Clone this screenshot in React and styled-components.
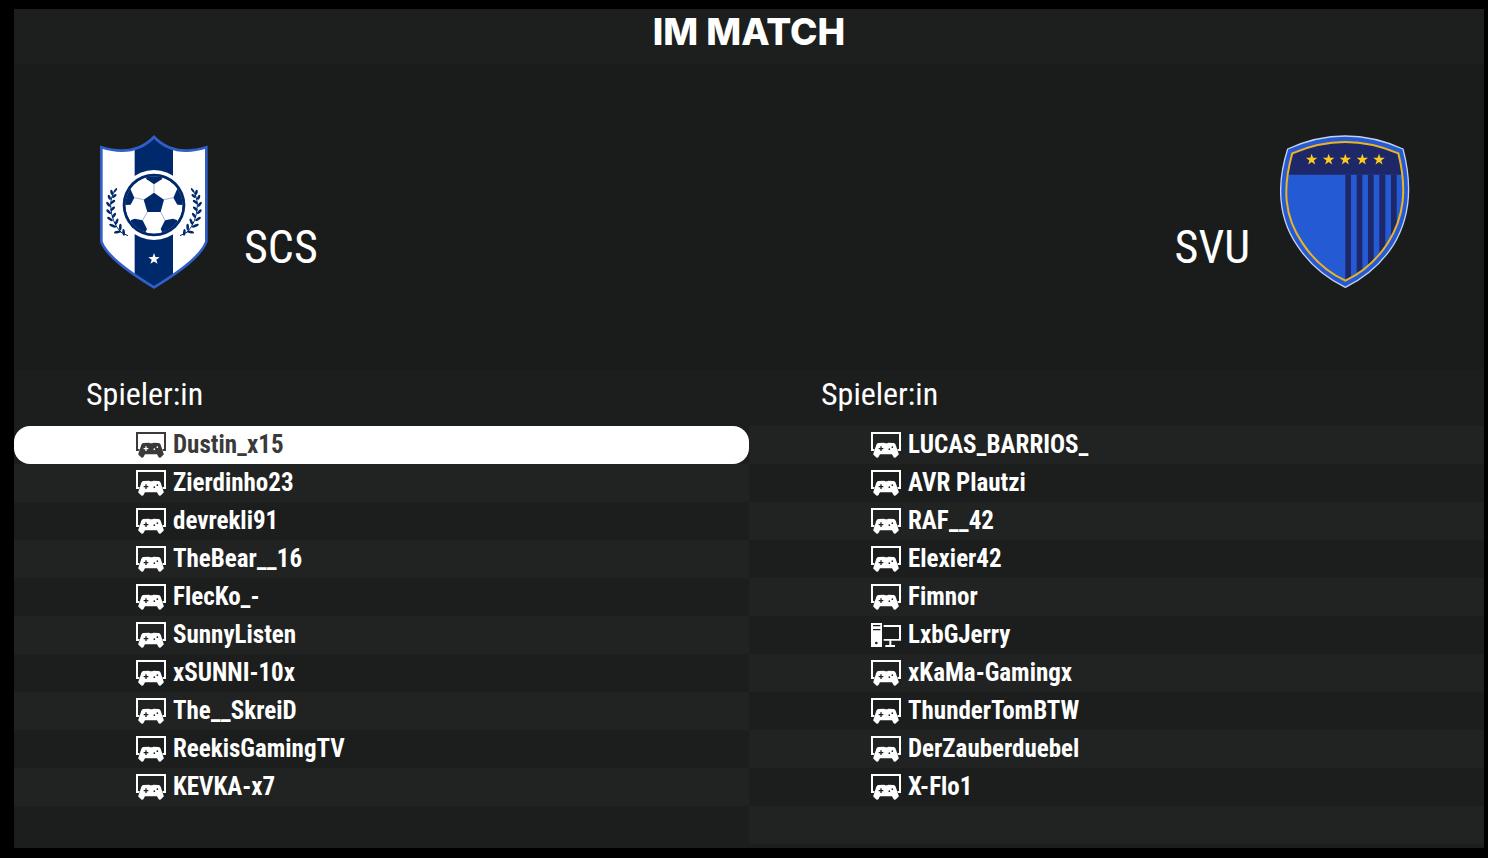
import React from "react";
import styled, { createGlobalStyle } from "styled-components";

const GlobalStyle = createGlobalStyle`
  * {
    box-sizing: border-box;
  }
  body {
    margin: 0;
    background: #000;
    color: #fff;
    font-family: "Roboto Condensed", Roboto, sans-serif;
  }
`;
const Page = styled.div`
  min-height: 100vh;
  padding: 9px 4px 10px 14px;
  display: flex;
`;
const Screen = styled.main`
  flex: 1;
  display: flex;
  flex-direction: column;
  background: #1a1c1b;
`;
const TitleBar = styled.header`
  padding: 3px 0 12px;
  background: #1d1f1e;
`;
const Title = styled.h1`
  margin: 0;
  font-family: Inter, sans-serif;
  font-size: 37px;
  line-height: 40px;
  font-weight: 800;
  text-align: center;
`;
const Matchup = styled.section`
  display: flex;
  justify-content: space-between;
  padding: 71px 74px 81px 86px;
`;
const Club = styled.div`
  display: flex;
  align-items: flex-end;
  gap: ${(props) => (props.$away ? "30px" : "36px")};
  flex-direction: ${(props) => (props.$away ? "row-reverse" : "row")};
`;
const ClubName = styled.h2`
  margin: 0;
  padding-bottom: 14px;
  font-size: 46px;
  line-height: 56px;
  font-weight: 400;
`;
const Crest = styled.svg`
  display: block;
  height: 154px;
`;
const Lineups = styled.section`
  flex: 1;
  display: grid;
  grid-template-columns: 1fr 1fr;
  align-items: start;
  background: #1c1e1d;
`;
const PlayerTable = styled.table`
  width: 100%;
  border-collapse: separate;
  border-spacing: 0;
`;
const HeadCell = styled.th`
  height: 56px;
  padding: 0 0 8px 72px;
  font-size: 32px;
  line-height: 40px;
  font-weight: 400;
  text-align: left;
`;
const PlayerCell = styled.td`
  height: 38px;
  padding: 0 0 0 122px;
  border-radius: ${(props) => (props.$selected ? "16px" : "0")};
  color: ${(props) => (props.$selected ? "#3a3a3a" : "#fff")};
  background: ${(props) =>
    props.$selected ? "#fff" : props.$light ? "#212322" : "#1c1e1d"};
`;
const Player = styled.div`
  display: flex;
  align-items: center;
  gap: 7px;
  font-size: 25px;
  line-height: 36px;
  font-weight: 700;
`;
const PlatformSvg = styled.svg`
  display: block;
  flex: none;
  width: 30px;
  height: 28px;
`;

const ConsoleIcon = () => (
  <PlatformSvg viewBox="0 0 90 84" fill="currentColor" aria-hidden="true">
    <path d="M0 3H90V60H81L79 54H84V9H6V54H11L9 60H0Z" />
    <path
      fillRule="evenodd"
      d="M22 36L39 35L42 37H49L52 35L68 36Q72 36 74 41L83 68Q84 71 81 73L73 80Q70 81 68 79L63 70H27L22 79Q20 81 17 80L9 73Q6 71 7 68L16 41Q18 36 22 36ZM28 46V51H23V55H28V60H32V55H37V51H32V46ZM64 46A2 2 0 1 0 64 51A2 2 0 1 0 64 46ZM55 52A2 2 0 1 0 55 57A2 2 0 1 0 55 52Z"
    />
  </PlatformSvg>
);

const PcIcon = () => (
  <PlatformSvg viewBox="0 0 90 84" fill="currentColor" aria-hidden="true">
    <path
      fillRule="evenodd"
      d="M0 6H33V78H0ZM6 12V16H28V12ZM6 24V28H28V24ZM16 62A4 4 0 1 0 16 70A4 4 0 1 0 16 62Z"
    />
    <path d="M38 12H90V59H61V72H72V78H43V72H55V59H38V54H84V18H38Z" />
  </PlatformSvg>
);

const STAR = "M0 -18L4.2 -5.8L17.1 -5.6L6.8 2.2L10.6 14.6L0 7.2L-10.6 14.6L-6.8 2.2L-17.1 -5.6L-4.2 -5.8Z";

const LaurelBranch = () => (
  <g fill="#00296b">
    <path
      d="M97 191Q80 212 80 242Q82 292 111 322L132 332"
      fill="none"
      stroke="#00296b"
      strokeWidth="3"
    />
    <ellipse cx="94" cy="196" rx="8" ry="3" transform="rotate(-52 94 196)" />
    <ellipse cx="83" cy="202" rx="8" ry="4" transform="rotate(75 83 202)" />
    <ellipse cx="91" cy="213" rx="8" ry="4" transform="rotate(-40 91 213)" />
    <ellipse cx="76" cy="217" rx="8" ry="4" transform="rotate(65 76 217)" />
    <ellipse cx="86" cy="231" rx="9" ry="4" transform="rotate(-35 86 231)" />
    <ellipse cx="73" cy="238" rx="9" ry="4" transform="rotate(50 73 238)" />
    <ellipse cx="86" cy="251" rx="9" ry="4" transform="rotate(-40 86 251)" />
    <ellipse cx="74" cy="260" rx="9" ry="4" transform="rotate(42 74 260)" />
    <ellipse cx="90" cy="271" rx="9" ry="4" transform="rotate(-52 90 271)" />
    <ellipse cx="78" cy="282" rx="10" ry="4" transform="rotate(34 78 282)" />
    <ellipse cx="98" cy="290" rx="10" ry="4" transform="rotate(-68 98 290)" />
    <ellipse cx="86" cy="302" rx="11" ry="4" transform="rotate(22 86 302)" />
    <ellipse cx="109" cy="306" rx="10" ry="4" transform="rotate(-88 109 306)" />
    <ellipse cx="101" cy="321" rx="11" ry="4" transform="rotate(-10 101 321)" />
    <ellipse cx="119" cy="322" rx="10" ry="4" transform="rotate(-95 119 322)" />
  </g>
);

const ScsCrest = () => (
  <Crest viewBox="48 30 324 462" role="img" aria-label="SCS">
    <defs>
      <clipPath id="scs-shield">
        <path d="M52 67Q151 97 210 36Q269 97 367 67V350Q348 404 210 487Q72 404 52 350Z" />
      </clipPath>
      <clipPath id="scs-ball">
        <circle cx="210" cy="240" r="86" />
      </clipPath>
    </defs>
    <g clipPath="url(#scs-shield)">
      <path d="M48 30H372V492H48Z" fill="#fff" />
      <path d="M152 30H267V492H152Z" fill="#00296b" />
    </g>
    <path
      d="M52 67Q151 97 210 36Q269 97 367 67V350Q348 404 210 487Q72 404 52 350Z"
      fill="none"
      stroke="#315fc9"
      strokeWidth="8"
    />
    <circle cx="210" cy="240" r="105" fill="#fff" />
    <circle cx="210" cy="240" r="94" fill="#00296b" />
    <g clipPath="url(#scs-ball)">
      <circle cx="210" cy="240" r="86" fill="#fff" />
      <g fill="#00296b">
        <path d="M210 203L240 224L230 261H190L179 224Z" />
        <path d="M180 150L188 163L210 178L233 163L240 150Z" />
        <path d="M120 240V192L138 189L151 218L140 239Z" />
        <path d="M300 240V192L281 189L268 218L280 239Z" />
        <path d="M140 286L152 281L176 286L189 312L182 326L140 326Z" />
        <path d="M280 286L267 281L243 286L230 312L237 326L280 326Z" />
      </g>
      <path
        d="M210 178V203M179 224L151 218M240 224L268 218M190 261L176 286M230 261L243 286"
        fill="none"
        stroke="#a6b5d0"
        strokeWidth="3"
      />
    </g>
    <LaurelBranch />
    <g transform="translate(420 0) scale(-1 1)">
      <LaurelBranch />
    </g>
    <path d={STAR} transform="translate(210 402)" fill="#fff" />
  </Crest>
);

const SvuCrest = () => (
  <Crest viewBox="360 30 390 462" role="img" aria-label="SVU">
    <defs>
      <clipPath id="svu-shield">
        <path d="M397 85Q555 17 715 85C741 190 734 275 683 355Q634 430 556 467Q477 430 428 355C372 275 367 190 397 85Z" />
      </clipPath>
    </defs>
    <path
      d="M383 72Q555 -6 729 72C760 189 748 283 699 362Q646 443 556 487Q465 443 412 362C358 283 346 189 383 72Z"
      fill="#245bd5"
      stroke="#c6d0ed"
      strokeWidth="4"
    />
    <g clipPath="url(#svu-shield)">
      <path d="M360 30H750V149H360Z" fill="#1e2868" />
      <path
        d="M556 149H573V490H556ZM590 149H607V490H590ZM624 149H641V490H624ZM658 149H676V490H658ZM693 149H710V490H693Z"
        fill="#1e2868"
      />
    </g>
    <path
      d="M397 85Q555 17 715 85C741 190 734 275 683 355Q634 430 556 467Q477 430 428 355C372 275 367 190 397 85Z"
      fill="none"
      stroke="#edb321"
      strokeWidth="6"
    />
    {[455, 506, 556, 607, 657].map((x) => (
      <path key={x} d={STAR} transform={`translate(${x} 104)`} fill="#ffcb1c" />
    ))}
  </Crest>
);

const homePlayers = [
  { name: "Dustin_x15", selected: true },
  { name: "Zierdinho23" },
  { name: "devrekli91" },
  { name: "TheBear__16" },
  { name: "FlecKo_-" },
  { name: "SunnyListen" },
  { name: "xSUNNI-10x" },
  { name: "The__SkreiD" },
  { name: "ReekisGamingTV" },
  { name: "KEVKA-x7" },
  {},
];
const awayPlayers = [
  { name: "LUCAS_BARRIOS_" },
  { name: "AVR Plautzi" },
  { name: "RAF__42" },
  { name: "Elexier42" },
  { name: "Fimnor" },
  { name: "LxbGJerry", pc: true },
  { name: "xKaMa-Gamingx" },
  { name: "ThunderTomBTW" },
  { name: "DerZauberduebel" },
  { name: "X-Flo1" },
  {},
];

const Lineup = ({ players, lightFrom }) => (
  <PlayerTable>
    <thead>
      <tr>
        <HeadCell scope="col">Spieler:in</HeadCell>
      </tr>
    </thead>
    <tbody>
      {players.map((player, i) => (
        <tr key={i}>
          <PlayerCell $selected={player.selected} $light={i % 2 === lightFrom}>
            {player.name && (
              <Player>
                {player.pc ? <PcIcon /> : <ConsoleIcon />}
                {player.name}
              </Player>
            )}
          </PlayerCell>
        </tr>
      ))}
    </tbody>
  </PlayerTable>
);

const App = () => {
  return (
    <Page>
      <GlobalStyle />
      <Screen>
        <TitleBar>
          <Title>IM MATCH</Title>
        </TitleBar>
        <Matchup>
          <Club>
            <ScsCrest />
            <ClubName>SCS</ClubName>
          </Club>
          <Club $away>
            <SvuCrest />
            <ClubName>SVU</ClubName>
          </Club>
        </Matchup>
        <Lineups>
          <Lineup players={homePlayers} lightFrom={1} />
          <Lineup players={awayPlayers} lightFrom={0} />
        </Lineups>
      </Screen>
    </Page>
  );
};

export default App;
